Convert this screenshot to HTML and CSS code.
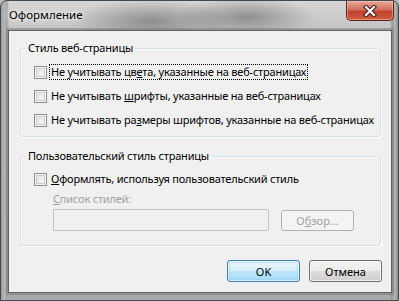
FILE: index.html
```html
<!DOCTYPE html>
<html lang="ru">
<head>
  <meta charset="UTF-8">
  <title>Оформление</title>
  <link rel="stylesheet" href="styles.css">
</head>
<body>
  <div class="window">
    <div class="titlebar">
      <span class="title">Оформление</span>
      <button class="close" aria-label="Закрыть">
        <svg width="14" height="12" viewBox="0 0 14 12">
          <path d="M3 2 L11 10 M11 2 L3 10" stroke="#3a1a14" stroke-width="4.2" stroke-linecap="square"/>
          <path d="M3 2 L11 10 M11 2 L3 10" stroke="#fff" stroke-width="2.2" stroke-linecap="square"/>
        </svg>
      </button>
    </div>

    <div class="client">
      <fieldset class="group">
        <legend>Стиль веб-страницы</legend>
        <div class="group-body">
          <label class="check"><span class="box"></span><span class="text focused">Не учитывать цв<u>е</u>та, указанные на веб-страницах</span></label>
          <label class="check"><span class="box"></span><span class="text">Не учитывать <u>ш</u>рифты, указанные на веб-страницах</span></label>
          <label class="check"><span class="box"></span><span class="text">Не учитывать ра<u>з</u>меры шрифтов, указанные на веб-страницах</span></label>
        </div>
      </fieldset>

      <fieldset class="group group-user">
        <legend>Пользовательский стиль страницы</legend>
        <div class="group-body">
          <label class="check"><span class="box"></span><span class="text"><u>О</u>формлять, используя пользовательский стиль</span></label>
          <div class="style-list">
            <div class="field-label"><u>С</u>писок стилей:</div>
            <div class="field-row">
              <div class="input"></div>
              <button class="btn btn-browse" disabled>О<u>б</u>зор...</button>
            </div>
          </div>
        </div>
      </fieldset>

      <div class="actions">
        <button class="btn btn-default">OK</button>
        <button class="btn">Отмена</button>
      </div>
    </div>
  </div>
</body>
</html>
```

FILE: styles.css
```css
* {
  box-sizing: border-box;
}

html, body {
  margin: 0;
}

body {
  font-family: "Noto Sans", "Open Sans", sans-serif;
  font-size: 11px;
  letter-spacing: -0.2px;
  color: #000;
  background: #bdbdbd;
}

/* window frame */
.window {
  width: 399px;
  height: 301px;
  display: flex;
  flex-direction: column;
  padding: 0 6px 7px 7px;
  border: 1px solid #404850;
  border-radius: 7px 7px 0 0;
  background:
    radial-gradient(ellipse 80px 22px at 150px 20px, rgba(95, 95, 95, 0.55), transparent),
    radial-gradient(ellipse 70px 20px at 245px 16px, rgba(85, 85, 85, 0.5), transparent),
    linear-gradient(to right, #9a9a9a, #b8b8b8 3px, #a4a4a4 6px, transparent 8px),
    linear-gradient(to left, #8a8a8a, #b6b6b6 3px, #9a9a9a 6px, transparent 8px),
    linear-gradient(to bottom, #d6d6d6, #c2c2c2 30px, #a8a8a8);
}

.titlebar {
  height: 29px;
  display: flex;
  justify-content: space-between;
  align-items: flex-start;
}

.title {
  padding: 6px 0 0 1px;
  font-size: 11.5px;
  letter-spacing: 0;
  line-height: 16px;
  text-shadow: 0 0 8px #fff, 0 0 4px #fff;
}

.close {
  width: 48px;
  height: 20px;
  margin: 0 -2px 0 0;
  padding: 0;
  display: flex;
  align-items: center;
  justify-content: center;
  border: 1px solid #5b2418;
  border-top: none;
  border-radius: 0 0 5px 5px;
  background: linear-gradient(to bottom, #e8a89a, #d0705e 45%, #c0442e 55%, #d05c40);
  box-shadow: inset 0 0 0 1px rgba(255, 210, 200, 0.45);
}

/* client area */
.client {
  flex: 1;
  display: flex;
  flex-direction: column;
  padding-top: 9px;
  background: #f0f0f0;
  border: 1px solid #5f6468;
  box-shadow: 0 0 0 2px rgba(110, 110, 110, 0.45);
}

.group {
  margin: 0 10px 0 11px;
  padding: 0 0 8px;
  border: 1px solid #d5dfe5;
  border-radius: 3px;
  box-shadow: 1px 1px 0 #fff, inset 1px 1px 0 #fff;
  min-width: 0;
}

.group legend {
  margin-left: 5px;
  padding: 0 2px;
  line-height: 16px;
}

.group-body {
  padding: 8px 0 0 13px;
  display: flex;
  flex-direction: column;
  gap: 8px;
}

.group-user {
  margin-top: 11px;
  padding-bottom: 14px;
}

.group-user .group-body {
  padding-top: 7px;
  gap: 0;
}

.check {
  display: flex;
  align-items: flex-start;
  height: 16px;
}

.box {
  width: 13px;
  height: 13px;
  margin: 2px 2px 0 0;
  flex: none;
  border: 1px solid #8e8f8f;
  background: #f4f4f4;
  box-shadow: inset 0 0 0 1px #f4f4f4, inset 0 0 0 2px #c9ccd1;
  background-image: linear-gradient(135deg, #d8dbe0, #fdfdfd);
}

.text {
  padding: 0 1px;
  line-height: 14px;
  border: 1px dotted transparent;
  white-space: nowrap;
}

.text.focused {
  border-color: #000;
}

.style-list {
  padding: 4px 0 0 19px;
}

.field-label {
  line-height: 16px;
  color: #a0a0a0;
}

.field-row {
  display: flex;
  align-items: center;
  gap: 12px;
  margin-top: 2px;
}

.input {
  width: 216px;
  height: 22px;
  border: 1px solid #c2c2c2;
  border-radius: 1px;
  background: #f0f0f0;
}

/* buttons */
.btn {
  width: 73px;
  height: 22px;
  padding: 0;
  font: inherit;
  color: #000;
  border: 1px solid #707070;
  border-radius: 3px;
  background: linear-gradient(to bottom, #f2f2f2, #ebebeb 50%, #dddddd 50%, #cfcfcf);
  box-shadow: inset 0 0 0 1px rgba(255, 255, 255, 0.7);
}

.btn-browse {
  height: 21px;
  color: #a0a0a0;
  border-color: #adb2b5;
  background: #f4f4f4;
  box-shadow: none;
}

.btn-default {
  border-color: #3c7fb1;
  background: linear-gradient(to bottom, #eaf6fd, #d9f0fc 50%, #bee6fd 50%, #a7d9f5);
  box-shadow: inset 0 0 0 1px rgba(255, 255, 255, 0.6), inset 0 0 2px 2px rgba(120, 200, 240, 0.35);
}

.actions {
  display: flex;
  justify-content: flex-end;
  gap: 9px;
  margin-top: 14px;
  padding-right: 9px;
}
```
